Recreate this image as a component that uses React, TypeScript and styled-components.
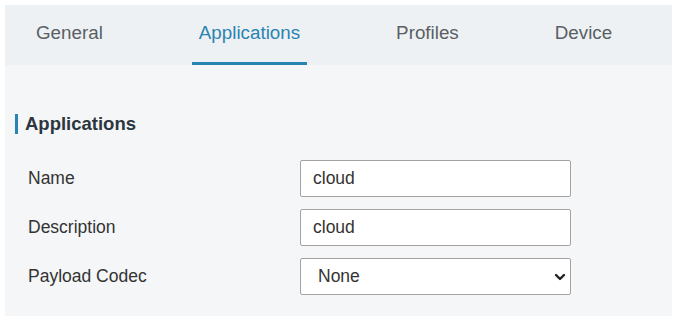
import React, { useState } from 'react'
import styled, { createGlobalStyle } from 'styled-components'

const colors = {
  blue: '#2a84b2',
  tabBg: '#eef1f3',
  panelBg: '#f5f6f7',
  border: '#a3a3a3',
}

const GlobalStyle = createGlobalStyle`
  body {
    margin: 0;
    background: #ffffff;
    font-family: "Liberation Sans", Arial, sans-serif;
  }
`

const Page = styled.div`
  padding: 5px 5px 0 5px;
  width: 667px;
`

const TabBar = styled.nav`
  display: flex;
  align-items: flex-end;
  gap: 82px;
  height: 60px;
  padding-left: 24px;
  background-color: ${ colors.tabBg };
`

const Tab = styled.div<{ $active?: boolean }>`
  box-sizing: border-box;
  height: 60px;
  padding: 0 7px 1px 7px;
  display: flex;
  align-items: center;
  font-size: 18.8px;
  color: ${ p => p.$active ? colors.blue : '#5a5f63' };
  border-bottom: 3px solid ${ p => p.$active ? colors.blue : 'transparent' };
  cursor: pointer;
`

const Panel = styled.section`
  background-color: ${ colors.panelBg };
  padding: 49px 0 21px 0;
`

const Title = styled.h3`
  margin: 0 0 26px 10px;
  padding-left: 7px;
  border-left: 3px solid ${ colors.blue };
  font-size: 18.5px;
  line-height: 20px;
  font-weight: bold;
  color: #2c3640;
`

const Form = styled.div`
  display: flex;
  flex-direction: column;
  gap: 12px;
  padding-left: 23px;
`

const Row = styled.label`
  display: grid;
  grid-template-columns: 272px 271px;
  align-items: center;
`

const Label = styled.span`
  font-size: 17.5px;
  color: #333;
`

const Input = styled.input`
  box-sizing: border-box;
  height: 37px;
  width: 100%;
  padding: 0 12px;
  border: 1px solid ${ colors.border };
  border-radius: 2px;
  background: #fff;
  font-family: inherit;
  font-size: 17.5px;
  color: #333;
  outline: none;
`

const SelectBox = styled.div`
  box-sizing: border-box;
  height: 37px;
  display: flex;
  align-items: center;
  justify-content: space-between;
  padding: 0 4px 0 17px;
  border: 1px solid ${ colors.border };
  border-radius: 2px;
  background: #fff;
  font-size: 17.5px;
  color: #333;
`

const Chevron = () => (
  <svg width="12" height="8" viewBox="0 0 12 8">
    <path d="M2 2 L6 6 L10 2" fill="none" stroke="#222" strokeWidth="2.4" strokeLinecap="round" strokeLinejoin="round" />
  </svg>
)

const tabs = ['General', 'Applications', 'Profiles', 'Device']

const App = () => {
  const [active, setActive] = useState('Applications')
  const [name, setName] = useState('cloud')
  const [desc, setDesc] = useState('cloud')

  return (
    <Page>
      <GlobalStyle />
      <TabBar>
        { tabs.map(t => (
          <Tab key={ t } $active={ t === active } onClick={ () => setActive(t) }>{ t }</Tab>
        )) }
      </TabBar>
      <Panel>
        <Title>Applications</Title>
        <Form>
          <Row>
            <Label>Name</Label>
            <Input value={ name } onChange={ e => setName(e.target.value) } />
          </Row>
          <Row>
            <Label>Description</Label>
            <Input value={ desc } onChange={ e => setDesc(e.target.value) } />
          </Row>
          <Row>
            <Label>Payload Codec</Label>
            <SelectBox>
              <span>None</span>
              <Chevron />
            </SelectBox>
          </Row>
        </Form>
      </Panel>
    </Page>
  )
}

export default App
